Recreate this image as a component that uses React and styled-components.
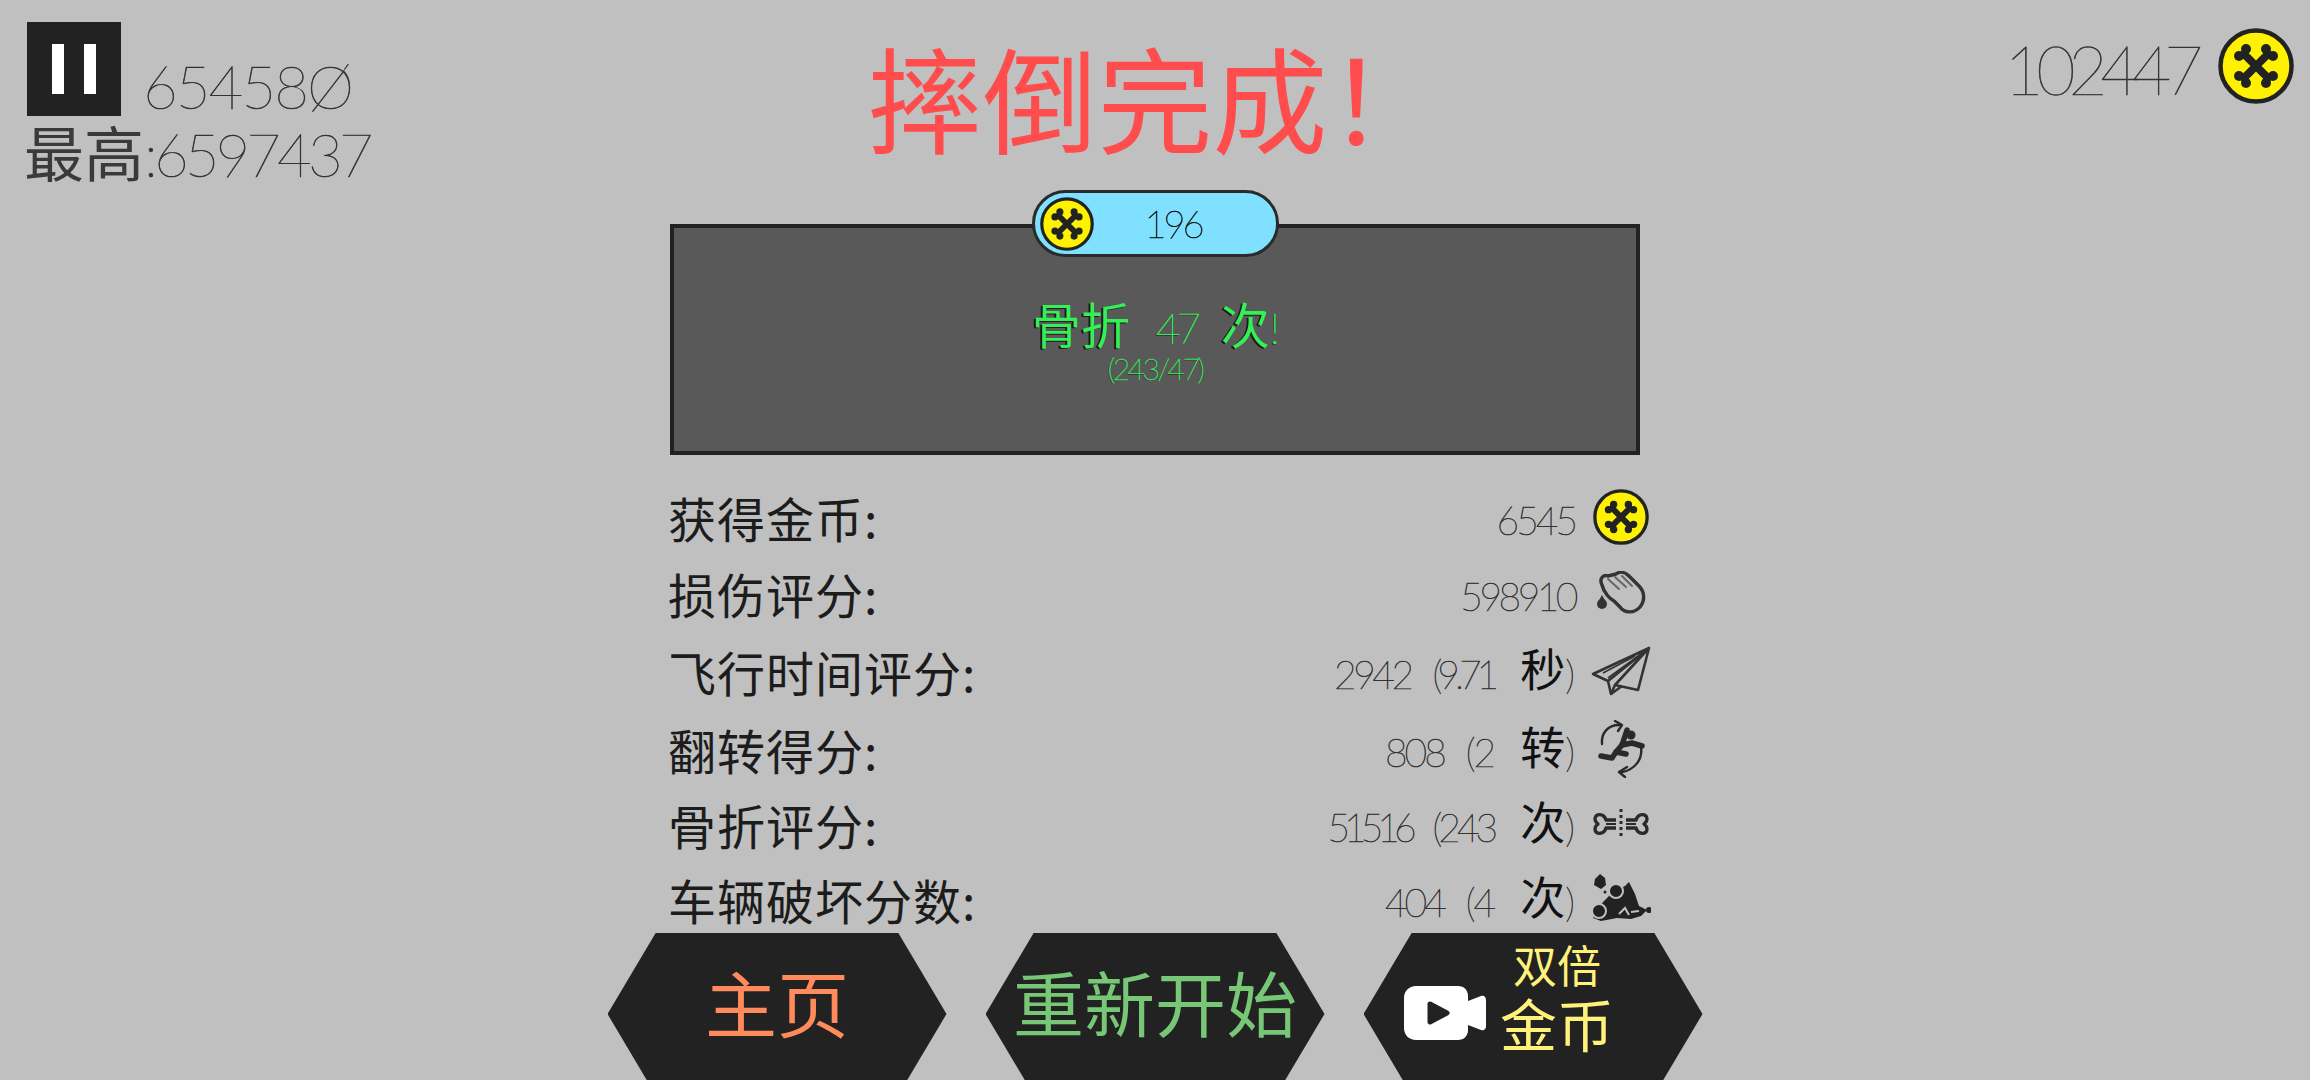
import styled, { createGlobalStyle } from 'styled-components';

const GlobalStyle = createGlobalStyle`
  html, body {
    margin: 0;
    padding: 0;
    background: #c0c0c0;
  }
  * {
    box-sizing: border-box;
  }
`;

const cjk = `"Noto Sans CJK SC", "Noto Sans", sans-serif`;
const thin = `Lato, "Noto Sans CJK SC", sans-serif`;

const Page = styled.div`
  width: 2310px;
  height: 1080px;
  overflow: hidden;
  background: #c0c0c0;
  display: flex;
  flex-direction: column;
  align-items: center;
  font-family: ${cjk};
`;

const Header = styled.header`
  flex: none;
  width: 100%;
  height: 224px;
  display: grid;
  grid-template-columns: 1fr auto 1fr;
`;

const Hud = styled.div`
  padding: 22px 0 0 27px;
`;

const ScoreLine = styled.div`
  display: flex;
  align-items: flex-end;
  gap: 22px;
  height: 94px;
`;

const PauseButton = styled.div`
  width: 94px;
  height: 94px;
  background: #222;
  display: flex;
  align-items: center;
  justify-content: center;
  gap: 20px;
`;

const PauseBar = styled.span`
  width: 12px;
  height: 50px;
  background: #fff;
`;

const ThinNumber = styled.span`
  font-family: ${thin};
  font-weight: 100;
  font-size: ${({ $size }) => $size}px;
  letter-spacing: ${({ $track }) => $track || 0}px;
  line-height: 1;
  color: ${({ $color }) => $color || '#333'};
  -webkit-text-stroke: 0.6px ${({ $color }) => $color || '#333'};
`;

const BestLine = styled.div`
  display: flex;
  align-items: baseline;
  height: 70px;
  margin-left: -3px;
  color: #3a3a3a;
  font-size: 60px;
  line-height: 70px;
`;

const Title = styled.h1`
  margin: 28px 0 0;
  font-size: 115px;
  font-weight: 400;
  line-height: 135px;
  color: #ff4d4d;
`;

const Wallet = styled.div`
  display: flex;
  justify-content: flex-end;
  align-items: center;
  gap: 22px;
  height: 76px;
  margin-top: 28px;
  padding-right: 16px;
`;

const WalletAmount = styled(ThinNumber)`
  margin-top: 6px;
`;

const CoinSvg = styled.svg`
  flex: none;
  display: block;
`;

const Coin = ({ size }) => (
  <CoinSvg width={size} height={size} viewBox="0 0 76 76">
    <circle cx="38" cy="38" r="35.5" fill="#fff200" stroke="#222" strokeWidth="4.5" />
    <path d="M26 26 L50 50 M50 26 L26 50" stroke="#222" strokeWidth="8" strokeLinecap="round" />
    <g fill="#222">
      <circle cx="21" cy="28" r="5" />
      <circle cx="28" cy="21" r="5" />
      <circle cx="48" cy="21" r="5" />
      <circle cx="55" cy="28" r="5" />
      <circle cx="21" cy="48" r="5" />
      <circle cx="28" cy="55" r="5" />
      <circle cx="48" cy="55" r="5" />
      <circle cx="55" cy="48" r="5" />
    </g>
  </CoinSvg>
);

const Panel = styled.section`
  flex: none;
  position: relative;
  width: 970px;
  height: 231px;
  background: #595959;
  border: 4px solid #222;
  display: flex;
  flex-direction: column;
  align-items: center;
  padding-top: 66px;
`;

const RewardPill = styled.div`
  position: absolute;
  top: -38px;
  left: 358px;
  width: 247px;
  height: 67px;
  border: 3px solid #2a2a2a;
  border-radius: 34px;
  background: #7fe1ff;
  display: flex;
  align-items: center;
  padding-left: 5px;
`;

const PillValue = styled.div`
  flex: 1;
  text-align: center;
  padding-right: 24px;
`;

const BreakLine = styled.div`
  display: flex;
  align-items: baseline;
  height: 58px;
  margin-left: 2px;
  color: #33f055;
  font-size: 49px;
  line-height: 58px;
  text-shadow: -2px 1px 0 #1c1c1c;
`;

const BreakCount = styled.span`
  font-family: ${thin};
  font-weight: 100;
  font-size: ${({ $size }) => $size}px;
  letter-spacing: ${({ $track }) => $track || 0}px;
  margin: ${({ $margin }) => $margin || 0};
  -webkit-text-stroke: 0.5px #33f055;
  text-shadow: -1px 1px 0 #1c1c1c;
`;

const BreakRatio = styled.div`
  font-family: ${thin};
  font-weight: 100;
  font-size: 30px;
  line-height: 32px;
  letter-spacing: -2.5px;
  color: #33f055;
  -webkit-text-stroke: 0.4px #33f055;
  text-shadow: -1px 1px 0 #1c1c1c;
`;

const Rows = styled.div`
  flex: none;
  width: 1008px;
  padding-left: 17px;
  margin-top: 32px;
`;

const Row = styled.div`
  display: flex;
  align-items: center;
  height: 60px;
  margin-top: ${({ $offset }) => $offset || 0}px;
`;

const Label = styled.div`
  flex: 1;
  font-size: 48px;
  letter-spacing: 1px;
  line-height: 60px;
  color: #1c1c1c;
`;

const Value = styled.div`
  display: flex;
  align-items: center;
  margin: 6px -3px 0 0;
  line-height: 60px;
`;

const Unit = styled.span`
  font-size: 45px;
  color: #111;
  margin: 0 0 12px 26px;
`;

const Detail = styled(ThinNumber)`
  margin-left: 22px;
`;

const IconSlot = styled.div`
  flex: none;
  width: 87px;
  height: 60px;
  padding-left: 10px;
  display: flex;
  align-items: center;
  justify-content: center;
`;

const HandIcon = () => (
  <svg width="50" height="44" viewBox="0 0 50 44" fill="none" stroke="#333" strokeLinecap="round" strokeLinejoin="round">
    <path strokeWidth="3.4" d="M6 14 C3 8 7 3 12 5 L20 3 C24 0 29 1 33 5 L43 15 C49 21 49 30 44 36 C38 43 28 42 24 36 L18 30 C14 28 8 22 6 14 Z" />
    <path strokeWidth="2" stroke="#666" d="M12 8 L23 18 M19 6 L30 16 M26 5 L36 15" />
    <circle cx="6" cy="33" r="5" fill="#333" stroke="none" />
    <path fill="#333" stroke="none" d="M6 24 L10 31 L2 31 Z" />
  </svg>
);

const PlaneIcon = () => (
  <svg width="60" height="50" viewBox="0 0 60 50" fill="none" stroke="#333" strokeWidth="2.6" strokeLinejoin="round">
    <path d="M58 2 L2 28 L17 35 L58 2 L24 39 L47 44 L58 2" />
    <path d="M17 35 L20 48 L31 40" />
    <path d="M24 39 L20 48" />
    <path d="M12 27 L44 10 M17 32 L50 8" strokeWidth="1.6" />
  </svg>
);

const FlipIcon = () => (
  <svg width="50" height="58" viewBox="0 0 50 58" fill="none" stroke="#2a2a2a" strokeLinecap="round" strokeLinejoin="round">
    <path strokeWidth="2.4" d="M23 5 C12 5 5 13 6 24" />
    <path strokeWidth="2.4" d="M19 1 L26 5 L22 11" />
    <path strokeWidth="2.4" d="M45 27 C47 40 38 50 26 52" />
    <path strokeWidth="2.4" d="M31 47 L23 52 L29 57" />
    <path strokeWidth="5.5" d="M31 10 L26 25 L20 32 L16 38 L5 36" />
    <path strokeWidth="5.5" d="M20 32 L30 34 M26 25 L36 23 L46 26" />
    <circle cx="35" cy="15" r="4.5" fill="#2a2a2a" stroke="none" />
  </svg>
);

const BoneIcon = () => (
  <svg width="56" height="30" viewBox="0 0 56 30" fill="none" stroke="#2a2a2a" strokeLinejoin="round">
    <path strokeWidth="3.4" d="M23 11 L13 11 C11 4 2 4 2 10 C2 13 4 14 5 15 C4 16 2 17 2 20 C2 26 11 26 13 19 L23 19" />
    <path strokeWidth="3.4" d="M33 11 L43 11 C45 4 54 4 54 10 C54 13 52 14 51 15 C52 16 54 17 54 20 C54 26 45 26 43 19 L33 19" />
    <path strokeWidth="3" strokeDasharray="3 3" d="M28 0 L28 30" />
    <path strokeWidth="2" d="M13 15 L23 15 M33 15 L43 15" />
  </svg>
);

const CrashIcon = () => (
  <svg width="60" height="50" viewBox="0 0 60 50">
    <g fill="#222">
      <path d="M4 5 L9 0 L14 4 L15 11 L10 15 L3 11 Z" />
      <circle cx="14" cy="18" r="1.5" />
      <path d="M12 28 L22 18 L34 12 L38 8 L44 20 L48 32 L56 36 L50 42 L40 45 L26 44 L10 47 L2 44 L8 34 Z" />
      <circle cx="58" cy="36" r="3" />
    </g>
    <circle cx="25" cy="17" r="7" fill="#222" stroke="#c0c0c0" strokeWidth="2" />
    <circle cx="8" cy="37" r="7" fill="#222" stroke="#c0c0c0" strokeWidth="2" />
    <path d="M28 40 L34 34 L38 41 M40 38 L48 37" fill="none" stroke="#c0c0c0" strokeWidth="2" />
  </svg>
);

const ButtonRow = styled.nav`
  display: flex;
  gap: 39px;
  margin-top: 4px;
  flex: none;
`;

const HexButton = styled.div`
  flex: none;
  width: 339px;
  height: 162px;
  background: #222;
  clip-path: polygon(14.2% 0, 85.8% 0, 100% 50%, 85.8% 100%, 14.2% 100%, 0 50%);
  display: flex;
  align-items: center;
  justify-content: center;
  padding-bottom: 28px;
  padding-right: ${({ $shift }) => $shift || 0}px;
  font-size: ${({ $size }) => $size}px;
  color: ${({ $color }) => $color};
  white-space: nowrap;
`;

const VideoIcon = styled.svg`
  flex: none;
  margin: 26px 14px 0 0;
`;

const DoubleText = styled.div`
  display: flex;
  flex-direction: column;
  align-items: center;
  margin-bottom: 10px;
  color: #fff27a;
`;

const DoubleSmall = styled.span`
  font-size: 44px;
  line-height: 53px;
`;

const DoubleBig = styled.span`
  font-size: 57px;
  line-height: 62px;
`;

const App = () => {
  return (
    <Page>
      <GlobalStyle />
      <Header>
        <Hud>
          <ScoreLine>
            <PauseButton>
              <PauseBar />
              <PauseBar />
            </PauseButton>
            <ThinNumber $size={60} $track={-2}>65458Ø</ThinNumber>
          </ScoreLine>
          <BestLine>
            最高<ThinNumber $size={60} $track={-4}>:6597437</ThinNumber>
          </BestLine>
        </Hud>
        <Title>摔倒完成！</Title>
        <Wallet>
          <WalletAmount $size={68} $track={-7.5}>102447</WalletAmount>
          <Coin size={76} />
        </Wallet>
      </Header>

      <Panel>
        <RewardPill>
          <Coin size={54} />
          <PillValue>
            <ThinNumber $size={38} $track={-3} $color="#111">196</ThinNumber>
          </PillValue>
        </RewardPill>
        <BreakLine>
          骨折
          <BreakCount $size={42} $track={-4} $margin="0 24px 0 26px">47</BreakCount>
          次
          <BreakCount $size={42}>!</BreakCount>
        </BreakLine>
        <BreakRatio>(243/47)</BreakRatio>
      </Panel>

      <Rows>
        <Row>
          <Label>获得金币:</Label>
          <Value><ThinNumber $size={39} $track={-3}>6545</ThinNumber></Value>
          <IconSlot><Coin size={56} /></IconSlot>
        </Row>
        <Row $offset={16}>
          <Label>损伤评分:</Label>
          <Value><ThinNumber $size={39} $track={-3.5}>598910</ThinNumber></Value>
          <IconSlot><HandIcon /></IconSlot>
        </Row>
        <Row $offset={18}>
          <Label>飞行时间评分:</Label>
          <Value>
            <ThinNumber $size={39} $track={-3.5}>2942</ThinNumber>
            <Detail $size={39} $track={-5}>(9.71</Detail>
            <Unit>秒</Unit>
            <ThinNumber $size={39}>)</ThinNumber>
          </Value>
          <IconSlot><PlaneIcon /></IconSlot>
        </Row>
        <Row $offset={18}>
          <Label>翻转得分:</Label>
          <Value>
            <ThinNumber $size={39} $track={-3}>808</ThinNumber>
            <Detail $size={39} $track={-2}>(2</Detail>
            <Unit>转</Unit>
            <ThinNumber $size={39}>)</ThinNumber>
          </Value>
          <IconSlot><FlipIcon /></IconSlot>
        </Row>
        <Row $offset={15}>
          <Label>骨折评分:</Label>
          <Value>
            <ThinNumber $size={39} $track={-6}>51516</ThinNumber>
            <Detail $size={39} $track={-4}>(243</Detail>
            <Unit>次</Unit>
            <ThinNumber $size={39}>)</ThinNumber>
          </Value>
          <IconSlot><BoneIcon /></IconSlot>
        </Row>
        <Row $offset={15}>
          <Label>车辆破坏分数:</Label>
          <Value>
            <ThinNumber $size={39} $track={-3}>404</ThinNumber>
            <Detail $size={39} $track={-2}>(4</Detail>
            <Unit>次</Unit>
            <ThinNumber $size={39}>)</ThinNumber>
          </Value>
          <IconSlot><CrashIcon /></IconSlot>
        </Row>
      </Rows>

      <ButtonRow>
        <HexButton $size={72} $color="#ff8a5c">主页</HexButton>
        <HexButton $size={71} $color="#77c777">重新开始</HexButton>
        <HexButton $size={56} $color="#fff27a" $shift={48}>
          <VideoIcon width="82" height="54" viewBox="0 0 82 54">
            <path fill="#fff" d="M12 0 H54 C60 0 64 4 64 10 V15 L77 10 C80 9 82 11 82 14 V40 C82 43 80 45 77 44 L64 39 V44 C64 50 60 54 54 54 H12 C5 54 0 49 0 42 V12 C0 5 5 0 12 0 Z" />
            <path fill="#222" stroke="#222" strokeWidth="5" strokeLinejoin="round" d="M26 18 L43 27 L26 36 Z" />
          </VideoIcon>
          <DoubleText>
            <DoubleSmall>双倍</DoubleSmall>
            <DoubleBig>金币</DoubleBig>
          </DoubleText>
        </HexButton>
      </ButtonRow>
    </Page>
  );
};

export default App;
